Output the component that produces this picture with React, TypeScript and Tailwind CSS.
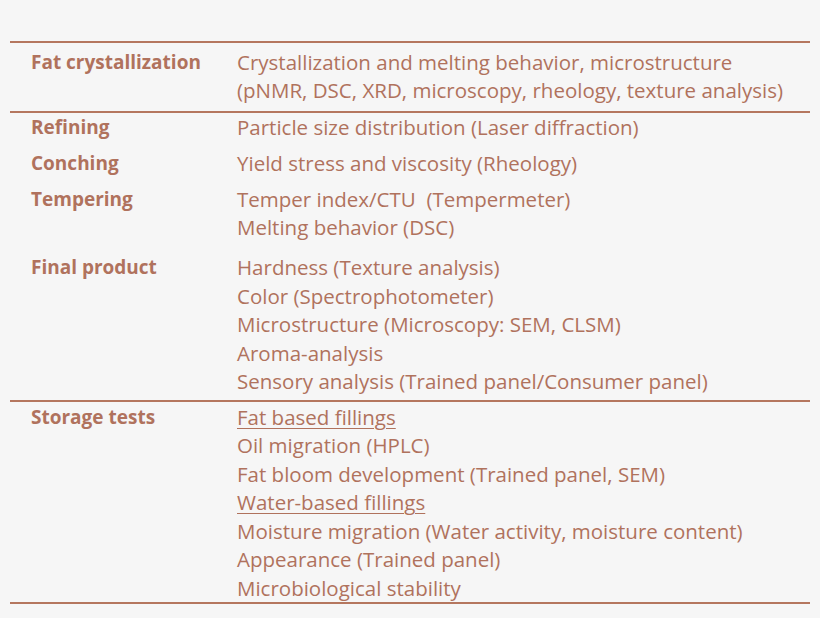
const rows: { label: string; lines: { text: string; u?: boolean }[]; mt: string }[][] = [
  [
    {
      label: 'Fat crystallization',
      mt: 'mt-0',
      lines: [
        { text: 'Crystallization and melting behavior, microstructure' },
        { text: '(pNMR, DSC, XRD, microscopy, rheology, texture analysis)' },
      ],
    },
  ],
  [
    { label: 'Refining', mt: 'mt-0', lines: [{ text: 'Particle size distribution (Laser diffraction)' }] },
    { label: 'Conching', mt: 'mt-[7.5px]', lines: [{ text: 'Yield stress and viscosity (Rheology)' }] },
    {
      label: 'Tempering',
      mt: 'mt-[7.5px]',
      lines: [{ text: 'Temper index/CTU\u00a0 (Tempermeter)' }, { text: 'Melting behavior (DSC)' }],
    },
    {
      label: 'Final product',
      mt: 'mt-[11.5px]',
      lines: [
        { text: 'Hardness (Texture analysis)' },
        { text: 'Color (Spectrophotometer)' },
        { text: 'Microstructure (Microscopy: SEM, CLSM)' },
        { text: 'Aroma-analysis' },
        { text: 'Sensory analysis (Trained panel/Consumer panel)' },
      ],
    },
  ],
  [
    {
      label: 'Storage tests',
      mt: 'mt-0',
      lines: [
        { text: 'Fat based fillings', u: true },
        { text: 'Oil migration (HPLC)' },
        { text: 'Fat bloom development (Trained panel, SEM)' },
        { text: 'Water-based fillings', u: true },
        { text: 'Moisture migration (Water activity, moisture content)' },
        { text: 'Appearance (Trained panel)' },
        { text: 'Microbiological stability' },
      ],
    },
  ],
];

const pads = ['pt-[4.5px] pb-[6px]', 'pt-0 pb-[4.5px]', 'pt-[0.5px] pb-0'];

export default function App() {
  return (
    <div
      className="w-[820px] h-[618px] bg-[#f6f6f6] text-[#b0725d] pt-[41px]"
      style={{ fontFamily: '"Open Sans", sans-serif' }}
    >
      <div className="mx-[10px] border-t-2 border-[#b5775f]">
        {rows.map((group, gi) => (
          <div key={gi} className={`border-b-2 border-[#b5775f] ${pads[gi]}`}>
            {group.map((r) => (
              <div key={r.label} className={`flex ${r.mt}`}>
                <div className="w-[227px] shrink-0 pl-[21px] font-bold text-[19px] leading-[28.5px]">
                  {r.label}
                </div>
                <div className="text-[20.5px] leading-[28.5px]">
                  {r.lines.map((l) => (
                    <div key={l.text} className={l.u ? 'underline underline-offset-[3px] decoration-1' : ''}>
                      {l.text}
                    </div>
                  ))}
                </div>
              </div>
            ))}
          </div>
        ))}
      </div>
    </div>
  );
}
